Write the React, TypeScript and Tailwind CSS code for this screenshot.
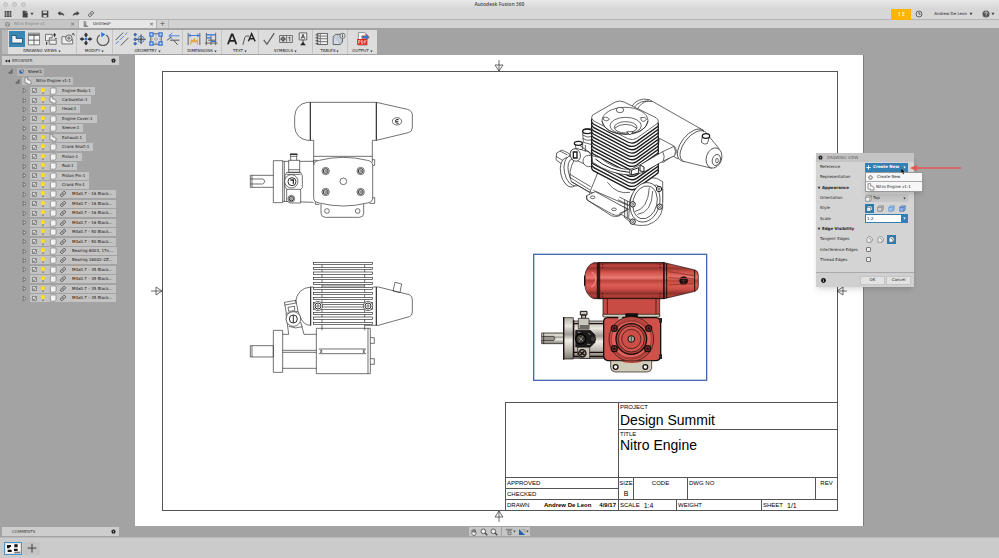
import React from "react";

const ui = "font-['DejaVu_Sans',sans-serif]";

type Children = { children: React.ReactNode };

function Glyph({ children, className = "size-4" }: Children & { className?: string }) {
  return (
    <svg viewBox="0 0 48 48" className={`${className} shrink-0`} fill="none" stroke="#4a4a4a" strokeWidth="3" aria-hidden="true">
      {children}
    </svg>
  );
}

function Caret({ className = "size-1" }: { className?: string }) {
  return (
    <svg viewBox="0 0 10 10" className={`${className} shrink-0`} aria-hidden="true">
      <path d="M1 2H9L5 8Z" fill="#444" />
    </svg>
  );
}

function Links({ className = "size-2" }: { className?: string }) {
  return (
    <Glyph className={className}>
      <g stroke="#444" strokeWidth="5">
        <path d="M20 28a8 8 0 0 1 0-11l7-7a8 8 0 0 1 11 11l-5 5" />
        <path d="M28 20a8 8 0 0 1 0 11l-7 7a8 8 0 0 1-11-11l5-5" />
      </g>
    </Glyph>
  );
}

function Gear() {
  return (
    <Glyph className="size-[5px]">
      <circle cx="24" cy="24" r="12" stroke="#222" strokeWidth="12" />
      <circle cx="24" cy="24" r="20" stroke="#222" strokeWidth="6" strokeDasharray="8 8" />
    </Glyph>
  );
}

/* ---------- top bars ---------- */

function TitleBar() {
  return (
    <header className="relative flex h-[9px] items-center justify-center bg-linear-to-b from-[#e9e9e9] to-[#d6d6d6]">
      <div className="absolute left-[3px] flex gap-1">
        {[0, 1, 2].map((i) => (
          <span key={i} className="size-[5px] rounded-full border border-[#bdbdbd] bg-[#d2d2d2]" />
        ))}
      </div>
      <h1 className="font-['Open_Sans',sans-serif] text-[5px] leading-none font-semibold text-[#444]">Autodesk Fusion 360</h1>
    </header>
  );
}

function QuickBar() {
  return (
    <div className="flex h-[11px] items-center border-b border-[#b4b4b4] bg-[#d7d7d7]">
      <button aria-label="Data panel" className="ml-1">
        <Glyph className="size-2">
          <path d="M4 11H44M4 24H44M4 37H44" stroke="#3c3c3c" strokeWidth="10" strokeDasharray="11 3.5" />
        </Glyph>
      </button>
      <button aria-label="File" className="ml-[9px] flex items-center gap-px">
        <Glyph className="size-2">
          <path d="M10 4H28V16H40V45H10Z M31 3L41 13H31Z" fill="#444" stroke="none" />
        </Glyph>
        <Caret />
      </button>
      <button aria-label="Save" className="ml-[7px]">
        <Glyph className="size-2">
          <path d="M4 4H44V44H4Z" fill="#444" stroke="none" />
          <path d="M12 7H36V20H12Z M14 30H34V42H14Z" fill="#d7d7d7" stroke="none" />
        </Glyph>
      </button>
      <button aria-label="Undo" className="ml-2">
        <Glyph className="size-2">
          <path d="M3 20L20 6V15Q42 16 44 38Q36 26 20 27V35Z" fill="#444" stroke="none" />
        </Glyph>
      </button>
      <button aria-label="Redo" className="ml-[7px]">
        <Glyph className="size-2">
          <path d="M45 20L28 6V15Q6 16 4 38Q12 26 28 27V35Z" fill="#444" stroke="none" />
        </Glyph>
      </button>
      <button aria-label="Share link" className="ml-[7px]">
        <Links />
      </button>
      <button className="ml-auto h-[11px] w-5 bg-[#ffb400] font-['Open_Sans',sans-serif] text-[5px] leading-none font-bold text-[#fff0c4]">1 E</button>
      <button aria-label="Job status" className="ml-1">
        <Glyph className="size-2">
          <circle cx="24" cy="24" r="18" strokeWidth="5" />
          <path d="M24 12V25H34" strokeWidth="5" />
        </Glyph>
      </button>
      <button className={`ml-[11px] flex items-center gap-0.5 text-[4px] leading-none whitespace-nowrap text-[#222] ${ui}`}>
        Andrew De Leon <Caret />
      </button>
      <button aria-label="Help" className="mr-1 ml-[9px] flex items-center gap-px">
        <Glyph className="size-2">
          <circle cx="24" cy="24" r="21" fill="#555" stroke="none" />
          <path d="M16 19Q17 11 24 11Q32 11 32 18Q32 22 24 26V30M24 34V39" stroke="#e4e4e4" strokeWidth="5" />
        </Glyph>
        <Caret />
      </button>
    </div>
  );
}

function SheetIcon() {
  return (
    <Glyph className="size-2">
      <path d="M10 6H22V22L40 42H10Z" fill="#8b8b8b" stroke="none" />
      <path d="M28 8V24" stroke="#aaa" />
    </Glyph>
  );
}

function Tabs() {
  return (
    <nav className={`flex h-2 items-stretch bg-[#d2d2d2] text-[4px] leading-none ${ui}`}>
      <div className="flex w-[78px] items-center bg-[#c6c6c6] pr-[3px] pl-1 text-[#858585]">
        <Glyph className="size-[7px]">
          <path d="M6 10L24 5L42 10V32L24 44L6 32Z" fill="#999" stroke="none" />
          <path d="M24 20V44M6 12L24 19L42 12" stroke="#ccc" />
        </Glyph>
        <button className="ml-[3px]">Nitro Engine v1</button>
        <button aria-label="Close Nitro Engine v1" className="ml-auto text-[6px] leading-none text-[#666]">×</button>
      </div>
      <div className="flex w-[79px] items-center border-x border-[#b2b2b2] bg-[#e6e6e6] pr-0.5 pl-[3px] text-[#222]">
        <SheetIcon />
        <button className="ml-[3px]">Untitled*</button>
        <button aria-label="Close Untitled" className="ml-auto text-[6px] leading-none text-[#555]">×</button>
      </div>
      <button aria-label="New tab" className="w-3 border-r border-[#bcbcbc] text-[7px] leading-none text-[#555]">+</button>
    </nav>
  );
}

/* ---------- toolbar ---------- */

const tools: { label: string; width: string; icons: React.ReactNode[] }[] = [
  {
    label: "DRAWING VIEWS",
    width: "w-[69px]",
    icons: [
      <path d="M6 12H21V22H43V38H6Z" fill="#eef4f8" stroke="#1f4f70" />,
      <>
        <path d="M5 4H43V44H5Z" fill="#f4f4f4" stroke="#777" />
        <path d="M5 10H43" strokeWidth="7" stroke="#777" />
        <path d="M5 28H43M24 10V44" stroke="#555" />
      </>,
      <>
        <path d="M5 8H28V20H18V30H5Z" fill="#eee" stroke="#666" />
        <path d="M18 28H42V42H18Z" fill="#eee" stroke="#666" />
        <path d="M36 4V16M32 10H41M9 34V44M37 23H44" stroke="#333" strokeWidth="4" />
      </>,
      <>
        <path d="M3 16H18V26H40V41H3Z" fill="#eee" stroke="#666" />
        <circle cx="27" cy="21" r="11" fill="#e8e8e8" stroke="#555" />
        <circle cx="27" cy="21" r="4" />
        <path d="M38 10L42 4L46 12" stroke="#333" />
      </>,
    ],
  },
  {
    label: "MODIFY",
    width: "w-9",
    icons: [
      <>
        <path d="M24 2L32 12H27V21H36V16L46 24L36 32V27H27V36H32L24 46L16 36H21V27H12V32L2 24L12 16V21H21V12H16Z" fill="#333" stroke="none" />
        <path d="M19 19H29V29H19Z" fill="#2f6fd6" stroke="#fff" strokeWidth="2" />
      </>,
      <>
        <path d="M13 10A20 20 0 1 0 35 10" stroke="#555" strokeWidth="4" />
        <path d="M17 1L32 8L19 18Z" fill="#2374e1" stroke="none" />
      </>,
    ],
  },
  {
    label: "GEOMETRY",
    width: "w-[70px]",
    icons: [
      <>
        <path d="M3 41L13 31M17 27L30 14M34 10L42 2" stroke="#3b7cd8" />
        <path d="M2 28L28 2M20 46L46 20" stroke="#444" />
      </>,
      <>
        <circle cx="31" cy="25" r="11" stroke="#3b7cd8" />
        <path d="M31 8V42M14 25H47" stroke="#444" />
        <g fill="#3b7cd8" stroke="#2458a6">
          <circle cx="11" cy="9" r="4" />
          <circle cx="11" cy="25" r="4" />
          <circle cx="11" cy="40" r="4" />
        </g>
        <circle cx="31" cy="25" r="4" />
      </>,
      <>
        <path d="M6 6H42V42H6Z" stroke="#555" />
        <path d="M24 8V40M8 24H40" stroke="#888" strokeDasharray="5 4" />
        <g fill="#cfe0f8" stroke="#2f6fd6" strokeWidth="4">
          <path d="M3 3H14V14H3ZM34 3H45V14H34ZM3 34H14V45H3ZM34 34H45V45H34Z" />
        </g>
      </>,
      <>
        <path d="M10 13H46M10 13L22 3M10 13L22 23" stroke="#3b7cd8" />
        <path d="M4 28L18 17M14 28H46M26 28L40 44" stroke="#444" />
      </>,
    ],
  },
  {
    label: "DIMENSIONS",
    width: "w-[39px]",
    icons: [
      <>
        <path d="M4 3V45M44 3V45" stroke="#555" />
        <path d="M6 12H42M13 7L6 12L13 17M35 7L42 12L35 17" stroke="#2f6fd6" />
        <path d="M12 42L16 28L22 34L25 22L28 34L35 28L36 42" stroke="#e8a02c" strokeWidth="4" />
      </>,
      <>
        <path d="M8 3V45M24 12V45M40 3V45M3 38H46M14 28H40" stroke="#555" />
        <path d="M8 10H40M10 20H24M24 32H40" stroke="#2f6fd6" strokeWidth="4" />
      </>,
    ],
  },
  {
    label: "TEXT",
    width: "w-[37px]",
    icons: [
      <path d="M10 42L23 8H26L39 42M14 30H35" stroke="#222" strokeWidth="6" />,
      <>
        <path d="M3 44L10 18Q12 12 20 14H24" stroke="#444" />
        <path d="M22 32L33 6L45 32M26 23H40" stroke="#222" strokeWidth="5" />
      </>,
    ],
  },
  {
    label: "SYMBOLS",
    width: "w-[54px]",
    icons: [
      <path d="M6 27L17 42L42 4" stroke="#555" strokeWidth="4" />,
      <>
        <path d="M2 12H46V36H2ZM26 12V36" stroke="#666" />
        <circle cx="14" cy="24" r="6" />
        <path d="M14 14V34M4 24H24M32 20L37 17V32" />
      </>,
      <>
        <path d="M11 3H37V27H11Z" fill="#eee" stroke="#555" />
        <path d="M18 23L24 8L30 23M20 18H28M24 27V42" stroke="#333" />
        <path d="M14 45L24 34L34 45Z" fill="#222" stroke="none" />
      </>,
    ],
  },
  {
    label: "TABLES",
    width: "w-[35px]",
    icons: [
      <>
        <path d="M8 5H43V43H8Z" fill="#f2f2f2" stroke="#555" />
        <path d="M8 14H43M8 23H43M8 33H43M18 5V43" stroke="#666" />
        <path d="M2 10H12M2 20H12M2 30H12M2 40H12" stroke="#333" />
      </>,
      <>
        <path d="M4 16H28V43H4Z" fill="#d5dbe2" stroke="#555" />
        <path d="M4 16L12 8H36L28 16L36 10V34L28 43" fill="#c3ccd6" stroke="#555" />
        <circle cx="36" cy="13" r="9" fill="#ddd" stroke="#666" />
        <path d="M36 8V18" />
      </>,
    ],
  },
  {
    label: "OUTPUT",
    width: "w-[29px]",
    icons: [
      <>
        <path d="M8 2H30L38 10V45H8Z" fill="#fafafa" stroke="#888" />
        <path d="M4 24H38V44H4Z" fill="#e0241b" stroke="none" />
        <path d="M9 40V29Q15 28 15 32T9 35M19 29V40Q26 40 25 34T19 29M30 40V29H36M30 34H35" stroke="#fff" strokeWidth="2" />
        <path d="M20 13H34V6L46 18L34 29V22H20Z" fill="#2b7cd3" stroke="#d8402f" strokeWidth="2" />
      </>,
    ],
  },
];

function Toolbar() {
  return (
    <div className="flex pt-0.5 pb-px">
      <div className="ml-0.5 h-6 w-1.5 bg-[#b9b9b9]" />
      <div className="flex h-6 divide-x divide-[#c4c4c4] bg-[#dddddd]">
        {tools.map((group, g) => (
          <div key={group.label} className={`flex flex-col items-center justify-between pt-px pb-px ${group.width}`}>
            <div className="flex gap-px">
              {group.icons.map((icon, i) => (
                <button
                  key={i}
                  aria-label={`${group.label} ${i + 1}`}
                  className={g === 0 && i === 0 ? "bg-[#3c86b4] p-px" : "p-px"}
                >
                  <Glyph className="size-3.5">{icon}</Glyph>
                </button>
              ))}
            </div>
            <button className={`flex items-center gap-px text-[4px] leading-none whitespace-nowrap text-[#222] ${ui}`}>
              {group.label}
              <Caret className="size-[3px]" />
            </button>
          </div>
        ))}
      </div>
    </div>
  );
}

/* ---------- browser tree ---------- */

type Part = { name: string; kind: "body" | "assembly"; linked?: boolean };

const own = (name: string, kind: Part["kind"] = "body"): Part => ({ name, kind });
const linked = (name: string): Part => ({ name, kind: "body", linked: true });

const parts: Part[] = [
  own("Engine Body:1"),
  own("Carburetor:1", "assembly"),
  own("Head:1"),
  own("Engine Cover:1"),
  own("Sleeve:1"),
  own("Exhaust:1", "assembly"),
  own("Crank Shaft:1"),
  own("Piston:1"),
  own("Rod:1"),
  own("Piston Pin:1"),
  own("Crank Pin:1"),
  linked("M4x0.7 – 16 Black..."),
  linked("M4x0.7 – 16 Black..."),
  linked("M4x0.7 – 16 Black..."),
  linked("M4x0.7 – 16 Black..."),
  linked("M4x0.7 – 50 Black..."),
  linked("M4x0.7 – 50 Black..."),
  linked("Bearing 6003, 17n..."),
  linked("Bearing 16002–2Z..."),
  linked("M4x0.7 – 35 Black..."),
  linked("M4x0.7 – 35 Black..."),
  linked("M4x0.7 – 35 Black..."),
  linked("M4x0.7 – 35 Black..."),
];

function OpenArrow() {
  return (
    <Glyph className="size-[5px]">
      <path d="M40 6V40H6Z" fill="#888" stroke="#333" strokeWidth="5" />
    </Glyph>
  );
}

function BodyIcon({ kind }: { kind: Part["kind"] }) {
  return (
    <Glyph className="size-2">
      {kind === "body" ? (
        <path d="M8 12L14 6H42V36L36 43H8Z" fill="#f3f3f3" stroke="#777" strokeWidth="4" />
      ) : (
        <path d="M6 4H22V18H30L42 26V43H20V36H6Z" fill="#f3f3f3" stroke="#666" strokeWidth="4" />
      )}
    </Glyph>
  );
}

function Browser() {
  return (
    <aside className={`pt-px pl-0.5 text-[4px] leading-none text-[#111] ${ui}`}>
      <div className="flex h-[9px] w-[117px] items-center bg-[#cdcdcd] pl-[3px] text-[#444]">
        <svg viewBox="0 0 14 8" className="h-1 w-[5px]" aria-hidden="true">
          <path d="M0 4L6 0V3H8L14 0V8L8 5H6V8Z" fill="#222" />
        </svg>
        <span className="ml-0.5">BROWSER</span>
        <button aria-label="Browser settings" className="mr-[3px] ml-auto"><Gear /></button>
      </div>
      <ul className="mt-0.5 flex h-[236px] flex-col whitespace-nowrap">
        <li className="flex flex-1 items-center pl-1.5">
          <OpenArrow />
          <span className="ml-1 flex h-2 items-center gap-1 bg-[#b6b6b6] px-0.5">
            <Glyph className="size-[5px]">
              <path d="M4 4V44H44Z" fill="#2a5fae" stroke="none" />
              <path d="M18 8H44V34" stroke="#555" strokeWidth="5" />
            </Glyph>
            Sheet1
          </span>
        </li>
        <li className="flex flex-1 items-center pl-[13px]">
          <OpenArrow />
          <span className="ml-0.5 flex h-2 items-center gap-1 bg-[#bebebe] px-0.5">
            <BodyIcon kind="assembly" />
            Nitro Engine v1:1
          </span>
        </li>
        {parts.map((part, i) => (
          <li key={i} className="flex flex-1 items-center pl-5">
            <Glyph className="size-[5px]">
              <path d="M12 4V44L38 24Z" fill="#ddd" stroke="#444" strokeWidth="6" />
            </Glyph>
            <div className="ml-[3px] flex h-2 items-center bg-[#c3c3c3] pr-1 pl-0.5">
              <span className="relative flex">
                <input
                  type="checkbox"
                  defaultChecked
                  aria-label={`Show ${part.name}`}
                  className="size-[5px] appearance-none border border-[#8b8b8b] bg-[#e3e3e3]"
                />
                <svg viewBox="0 0 10 10" className="pointer-events-none absolute inset-0 size-[5px]" aria-hidden="true">
                  <path d="M2 5L4 8L8 2" fill="none" stroke="#666" strokeWidth="1.5" />
                </svg>
              </span>
              <Glyph className="ml-[3px] h-2 w-1.5">
                <circle cx="24" cy="16" r="16" fill="#ffdf1c" stroke="#e8c218" strokeWidth="2" />
                <path d="M16 28H32V34H16Z" fill="#ffe95c" stroke="none" />
                <path d="M18 35H30V46H18Z" fill="#666" stroke="none" />
              </Glyph>
              <span className="ml-[3px]"><BodyIcon kind={part.kind} /></span>
              {part.linked && <span className="ml-0.5"><Links /></span>}
              <span className="ml-[5px]">{part.name}</span>
            </div>
          </li>
        ))}
      </ul>
    </aside>
  );
}

/* ---------- drawing views, each in units of a third of a pixel ---------- */

function Screw({ x, y, r = 11 }: { x: number; y: number; r?: number }) {
  return (
    <>
      <circle cx={x} cy={y} r={r} />
      <circle cx={x} cy={y} r={r * 0.65} strokeWidth="3" />
      <circle cx={x} cy={y} r={r * 0.25} />
    </>
  );
}

function FrontView() {
  return (
    <g transform="translate(95 30) scale(0.33333)">
      <path d="M241 52H232Q196 58 194 95V124Q196 160 232 166H251M241 52H439L532 73Q547 77 547 90V128Q547 140 535 143L439 166H427M241 52V166M439 52V166M251 166V232M427 166V232M251 214H427" />
      <path d="M241 52V166M439 52V166" strokeWidth="3" />
      <ellipse cx="501" cy="109" rx="14" ry="11" />
      <path d="M506 103Q496 102 496 109T506 115M498 109H505" strokeWidth="3" />
      <path d="M251 242Q251 228 268 226Q340 208 412 226Q428 228 428 242V338Q428 352 412 354Q340 372 268 354Q251 352 251 338Z" />
      <path d="M251 240V226H262M427 224H434V241H428M428 338H434V355H418M256 350V358H268" />
      <Screw x={287} y={258} />
      <Screw x={392} y={258} />
      <Screw x={287} y={321} />
      <Screw x={392} y={321} />
      <circle cx="340" cy="289" r="10" />
      <path d="M273 357V385Q274 396 286 397H389Q401 396 401 385V357" />
      <circle cx="291" cy="378" r="7" />
      <circle cx="383" cy="378" r="7" />
      <path d="M130 227H158V353H130Z M158 229H251M158 349L251 352M163 229V349M130 271H61V307H130M66 271V307M61 282H98Q104 284 104 289T98 297H61" />
      <path d="M181 207H201V214H181ZM182 214V226M200 214V226M176 226H209V262H176ZM176 254H209M170 262H212L217 272V308L212 313H170L165 304V272ZM170 313V348L180 354H212V313M170 268H212" fill="#fff" />
      <path d="M180 208H202" strokeWidth="4" />
      <circle cx="184" cy="289" r="20" fill="#fff" />
      <circle cx="186" cy="290" r="12" strokeWidth="3" />
      <path d="M181 285H190V296" strokeWidth="4" />
      <Screw x={184} y={341} r={10} />
    </g>
  );
}

const sideFins = [37, 52, 66, 82, 97, 112, 127, 142, 157, 171, 187, 201, 217];

function SideView() {
  return (
    <g transform="translate(95 195) scale(0.33333)">
      <path d="M250 111H242Q202 114 196 158M242 226Q224 226 214 208M242 111V226M439 111V226M428 111H445L538 134Q547 138 547 150V186Q547 197 538 200L445 226H404" />
      <path d="M242 111V226M439 111V226" strokeWidth="3" />
      <path d="M495 97L515 102L510 128L489 123Z" />
      <path d="M276 44V241M404 44V241M276 108H404" />
      {sideFins.map((y) => (
        <rect key={y} x="250" y={y} width="178" height="7" fill="#fff" />
      ))}
      <g fill="#fff">
        <Screw x={264} y={168} r={14} />
        <Screw x={414} y={168} r={14} />
      </g>
      <path d="M259 235H421V371H259ZM414 235V371M421 263H433V280H421M421 326H433V343H421" />
      <path d="M268 297H407M268 311H407M268 297Q278 304 268 311M407 297Q397 304 407 311M275 299V309M400 299V309" />
      <path d="M130 241H158V367H130ZM61 287H130V321H61ZM66 287V321M158 253H176M222 253H259M158 301H259M158 307H259M158 355H259" />
      <path d="M163 157L198 151L204 184L169 190ZM165 165L199 159M174 172L194 169V182L176 184ZM172 222L176 253M212 216L222 253M168 190L172 222M204 184L214 208" />
      <circle cx="190" cy="207" r="22" fill="#fff" />
      <circle cx="190" cy="207" r="12" strokeWidth="3" />
      <path d="M190 196V218" strokeWidth="3" />
      <path d="M176 229Q196 238 218 230" />
    </g>
  );
}

const headOutline =
  "M256 51Q269 45 282 51L378 98Q388 104 384 114L320 160Q307 168 293 161L190 107Q180 98 188 90Z";

const isoFins = [15, 14, 13, 12, 11, 10, 9, 8, 7, 6, 5, 4, 3, 2, 1, 0];

function IsoView() {
  return (
    <g transform="translate(395 30) scale(0.33333)" fill="#fff" stroke="#1c1c1c">
      <path d="M304 66Q322 36 358 44L522 137L445 222L330 160Z" />
      <path d="M312 68Q330 42 366 50M322 74Q332 52 356 47" fill="none" />
      <ellipse cx="484" cy="180" rx="30" ry="56" transform="rotate(38 484 180)" />
      <ellipse cx="490" cy="183" rx="28" ry="54" transform="rotate(38 490 183)" />
      <path d="M524 138L568 192Q582 204 574 226Q566 252 546 250L456 228Q500 200 524 138Z" stroke="none" />
      <path d="M524 138L568 192M546 250L456 228" />
      <ellipse cx="552" cy="219" rx="23" ry="31" transform="rotate(18 552 219)" />
      <ellipse cx="559" cy="225" rx="12" ry="17" transform="rotate(18 559 225)" />
      <ellipse cx="561" cy="227" rx="4" ry="7" />
      <path d="M517 154L514 172Q522 180 532 176L538 156Z" />
      <ellipse cx="528" cy="153" rx="11" ry="7" strokeWidth="4" />
      <path d="M388 160L430 182Q442 190 438 206L400 232L380 226Z" />

      <path d="M80 204L96 195L118 206V226L98 240L78 224Z" />
      <path d="M90 198L112 210M78 214L98 226" />
      <ellipse cx="118" cy="262" rx="26" ry="45" transform="rotate(-12 118 262)" />
      <ellipse cx="130" cy="258" rx="27" ry="46" transform="rotate(-12 130 258)" />
      <ellipse cx="134" cy="258" rx="19" ry="37" transform="rotate(-12 134 258)" />
      <path d="M134 222Q170 205 200 240L206 320L180 322L124 290Q112 262 134 222Z" />
      <path d="M120 268L182 305M118 276L180 315M124 290L178 322" />
      <path d="M158 142Q160 130 176 131L190 134V180L160 172Z" />
      <ellipse cx="172" cy="139" rx="14" ry="7" strokeWidth="4" />
      <path d="M158 150Q170 160 188 154M158 160Q170 170 188 164" fill="none" />
      <path d="M134 174Q146 166 158 174V192L140 198Z" />
      <ellipse cx="145" cy="175" rx="12" ry="6" strokeWidth="4" />
      <path d="M122 198L138 190L176 200L186 214L170 240L140 226L126 224Z" />
      <ellipse cx="136" cy="210" rx="15" ry="19" transform="rotate(-15 136 210)" />
      <path d="M130 201H141V219H130Z" strokeWidth="4" />
      <circle cx="176" cy="228" r="17" />
      <path d="M150 182L184 206M166 180V200" />

      <path d="M204 262L180 320V332L300 404L398 350V290L380 280Z" />
      <path d="M180 320L298 374M190 316L296 362M232 292Q262 330 300 322" fill="none" />
      <path d="M170 332L196 320L292 372L270 390Q256 394 244 386L176 348Q168 340 170 332Z" />
      <path d="M170 332V344L244 392Q256 398 270 392V384L292 376" fill="none" />
      <ellipse cx="188" cy="337" rx="7" ry="4" />
      <ellipse cx="252" cy="373" rx="7" ry="4" />

      {isoFins.map((k) => (
        <path key={k} d={headOutline} transform={`translate(0 ${k * 10})`} strokeWidth={k === 0 ? 2 : 4} />
      ))}
      <ellipse cx="285" cy="107" rx="69" ry="40" />
      <path d="M216 108Q226 147 285 148T354 108" fill="none" />
      <ellipse cx="287" cy="122" rx="47" ry="25" />
      <ellipse cx="287" cy="127" rx="34" ry="17" />
      <path d="M253 130Q268 118 287 118T321 130" fill="none" />
      <ellipse cx="270" cy="75" rx="11" ry="8" />
      <path d="M220 98Q234 94 238 104Q228 112 220 104ZM332 98Q346 94 350 102Q342 114 334 106ZM290 140H310L300 150Z" />

      <path d="M186 212L210 218Q250 252 300 254L300 270Q240 268 188 232Z" />
      <path d="M196 222Q240 258 300 262" fill="none" strokeWidth="3" />
      <path d="M300 254L330 240L398 200L432 184Q440 200 434 212L400 228L340 262L304 272Q296 262 300 254Z" />
      <path d="M398 200Q406 214 400 228" fill="none" />
      <path d="M304 256L326 248V264L304 270ZM330 240L342 246V260L330 258Z" strokeWidth="3" />

      <path d="M268 336L300 352M264 344L296 360" />
      <path d="M300 344Q310 314 342 306L380 300L398 312V368Q392 408 352 420Q322 424 306 416L296 398Z" />
      <ellipse cx="345" cy="352" rx="44" ry="60" transform="rotate(14 345 352)" />
      <ellipse cx="345" cy="352" rx="36" ry="50" transform="rotate(14 345 352)" />
      <path d="M322 388Q366 384 368 318M314 380Q354 372 358 308" fill="none" />
      <path d="M284 344V398L302 412M292 348V400" fill="none" />
      {[[387, 312], [389, 365], [308, 358], [308, 410]].map(([x, y]) => (
        <g key={`${x}-${y}`}>
          <circle cx={x} cy={y} r="8" strokeWidth="3" />
          <circle cx={x} cy={y} r="3" />
        </g>
      ))}
    </g>
  );
}

function ShadedView() {
  return (
    <g transform="translate(390 190) scale(0.33333)" stroke="#1a0f0e">
      <defs>
        <linearGradient id="tube" x1="0" y1="0" x2="0" y2="1">
          <stop offset="0" stopColor="#7c2924" />
          <stop offset="0.08" stopColor="#c04640" />
          <stop offset="0.16" stopColor="#99362f" />
          <stop offset="0.26" stopColor="#cf5049" />
          <stop offset="0.42" stopColor="#ea7a72" />
          <stop offset="0.5" stopColor="#bb443d" />
          <stop offset="0.62" stopColor="#dc5d55" />
          <stop offset="0.74" stopColor="#cb4d46" />
          <stop offset="0.86" stopColor="#8f312c" />
          <stop offset="0.93" stopColor="#b8423b" />
          <stop offset="1" stopColor="#6d231f" />
        </linearGradient>
        <linearGradient id="steel" x1="0" y1="0" x2="0" y2="1">
          <stop offset="0" stopColor="#b2afa6" />
          <stop offset="0.2" stopColor="#e9e7de" />
          <stop offset="0.4" stopColor="#9c9a93" />
          <stop offset="0.55" stopColor="#f0eee6" />
          <stop offset="0.8" stopColor="#b7b4aa" />
          <stop offset="1" stopColor="#7c7a73" />
        </linearGradient>
      </defs>
      <rect x="26" y="28" width="519" height="378" fill="none" stroke="#4568b0" strokeWidth="4" />
      <path d="M50 264H116V296H50Z" fill="url(#steel)" />
      <path d="M50 274H86Q93 280 86 287H50M56 264V296" fill="#9a988f" />
      <path d="M116 218H145V342H116Z" fill="url(#steel)" />
      <path d="M116 216V344" strokeWidth="4" />
      <path d="M145 228H236V340H145Z" fill="url(#steel)" />
      <path d="M146 226V334H236M146 236H236M146 322H236" fill="none" strokeWidth="4" />
      <path d="M166 199H186V210H166ZM170 210H182V220H170Z" fill="#c9c7bd" strokeWidth="3" />
      <path d="M160 220H192V252H160ZM158 306H194V340H166L158 330Z" fill="#c9c7bd" />
      <path d="M164 240H192V252H164Z" fill="#6b6963" stroke="none" />
      <path d="M152 256H196L210 270V292L196 306H152Z" fill="#1b1b1b" />
      <circle cx="167" cy="282" r="15" fill="#37352f" stroke="#000" strokeWidth="4" />
      <path d="M160 276L174 288M174 274L162 290M190 264L196 270M158 262H166M186 298H196" stroke="#c9c7bd" />
      <circle cx="204" cy="282" r="8" fill="#3a3a38" />
      <circle cx="172" cy="325" r="11" fill="#9a978c" strokeWidth="4" />
      <path d="M165 320L179 331M178 319L166 331" strokeWidth="4" />

      <path d="M220 53H206Q182 62 179 96V118Q182 152 206 161H220Z" fill="url(#tube)" />
      <path d="M179 92V122" strokeWidth="4" />
      <path d="M220 53H418V161H220Z" fill="url(#tube)" strokeWidth="3" />
      <path d="M418 53L510 75Q520 78 520 90V124Q520 134 510 139L418 161Z" fill="url(#tube)" />
      <path d="M217 53V161M224 53V161M416 53V161M425 55V159M509 75V139" fill="none" strokeWidth="3" />
      <path d="M200 82Q214 88 212 108Q208 122 198 126" fill="none" stroke="#f0837a" strokeWidth="4" />
      <path d="M233 58V70M233 144V156M405 58V70M405 144V156" strokeDasharray="3 5" strokeWidth="3" />
      <circle cx="476" cy="107" r="12" fill="#141414" />
      <path d="M469 107H483M476 100V114" stroke="#7d2a25" />
      <path d="M430 80L508 92M430 98L508 102M430 120L508 116" stroke="#9c352f" strokeWidth="3" />

      <path d="M234 161H404V212H234Z" fill="#c84b44" />
      <path d="M247 161V210M393 161V210" />
      <path d="M234 208H404V216H234Z" fill="#d4d0bd" />
      <path d="M302 206H338V216H302Z" fill="#111" />
      <path d="M236 230Q236 219 248 218H394Q407 220 407 234V330Q407 346 394 347H248Q236 344 236 332Z" fill="#d0514a" strokeWidth="4" />
      <path d="M280 212H292V224H280Z" fill="#b9b9b9" stroke="none" />
      <path d="M403 219H411V233H403ZM403 328H411V342H403Z" fill="#222" stroke="none" />
      <circle cx="319" cy="282" r="67" fill="#c94c45" />
      <circle cx="319" cy="282" r="60" fill="#de625a" stroke="#8d2f29" />
      <path d="M270 254A58 58 0 0 1 366 252M272 318A58 58 0 0 0 366 314" fill="none" stroke="#a33a34" strokeWidth="6" />
      <circle cx="319" cy="282" r="46" fill="#b5423b" strokeWidth="4" />
      <circle cx="319" cy="282" r="39" fill="#d5554e" />
      <circle cx="319" cy="282" r="29" fill="#cd4e47" />
      <circle cx="319" cy="282" r="10" fill="#aaa596" strokeWidth="3" />
      <path d="M319 274V290" />
      {[[268, 250], [371, 250], [268, 311], [368, 311]].map(([x, y]) => (
        <g key={`${x}-${y}`}>
          <circle cx={x} cy={y} r="9" fill="#8c2f29" strokeWidth="4" />
          <circle cx={x} cy={y} r="3" fill="#111" />
        </g>
      ))}
      <path d="M257 347H380V370Q378 380 368 381H270Q258 380 257 368Z" fill="#cfccba" />
      <path d="M284 347H358Q340 354 320 354T284 347Z" fill="#b13c35" stroke="none" />
      <circle cx="272" cy="366" r="7" fill="#fff" strokeWidth="4" />
      <circle cx="361" cy="366" r="7" fill="#fff" strokeWidth="4" />
    </g>
  );
}

/* ---------- title block ---------- */

function TitleBlock() {
  return (
    <section className="grid h-[108px] w-[332px] grid-cols-[113px_1fr] border-t border-l border-[#555] font-['Liberation_Sans',sans-serif] text-[6px] leading-none font-medium whitespace-nowrap text-black">
      <div className="flex flex-col border-r border-[#555]">
        <div className="flex-1" />
        <div className="flex h-[11px] items-center border-t border-[#555] pl-px">APPROVED</div>
        <div className="flex h-[11px] items-center border-t border-[#555] pl-px">CHECKED</div>
        <div className="flex h-[11px] items-center border-t border-[#555] pr-0.5 pl-px">
          <span>DRAWN</span>
          <span className="ml-auto font-bold">Andrew De Leon</span>
          <span className="ml-2 font-bold">4/9/17</span>
        </div>
      </div>
      <div className="flex flex-col">
        <div className="h-[26px] pt-px pl-px">
          <p>PROJECT</p>
          <p className="text-sm">Design Summit</p>
        </div>
        <div className="flex-1 border-t border-[#555] pt-px pl-px">
          <p>TITLE</p>
          <p className="text-sm leading-4">Nitro Engine</p>
        </div>
        <div className="flex h-[22px] border-t border-[#555] pt-0 text-center">
          <div className="flex w-[15px] flex-col items-center gap-1 border-r border-[#555] pt-0.5">
            <span>SIZE</span>
            <span className="text-[7px] leading-none">B</span>
          </div>
          <div className="w-[54px] border-r border-[#555] pt-0.5">CODE</div>
          <div className="flex-1 border-r border-[#555] pt-0.5 pl-px text-left">DWG NO</div>
          <div className="w-[21px] pt-0.5">REV</div>
        </div>
        <div className="flex h-[11px] items-center border-t border-[#555]">
          <div className="flex h-full w-[58px] items-center gap-1 border-r border-[#555] pl-px">
            SCALE <span className="text-[7px] leading-none">1:4</span>
          </div>
          <div className="flex h-full flex-1 items-center border-r border-[#555] pl-px">WEIGHT</div>
          <div className="flex h-full w-[75px] items-center gap-1 pl-px">
            SHEET <span className="text-[7px] leading-none">1/1</span>
          </div>
        </div>
      </div>
    </section>
  );
}

function Sheet() {
  return (
    <main className="relative border-r border-[#7d7d7d] bg-white pt-4 pr-[25px] pb-[15px] pl-[27px]">
      <div className="flex h-full items-end justify-end border border-[#555]">
        <TitleBlock />
      </div>
      <svg
        viewBox="0 0 728 471"
        className="pointer-events-none absolute inset-0 size-full"
        fill="none"
        stroke="#2c2c2c"
        strokeWidth="2"
        role="img"
        aria-label="Front, isometric, side and shaded views of the engine"
      >
        <FrontView />
        <IsoView />
        <SideView />
        <ShadedView />
        <g strokeWidth="0.7">
          <path d="M364 5V16M360 10H368L364 16Z" />
          <path d="M364 467V456M360 462H368L364 456Z" />
          <path d="M16 236H27M21 232V240L27 236Z" />
          <path d="M712 236H702M708 232V240L702 236Z" />
        </g>
      </svg>
    </main>
  );
}

/* ---------- drawing view dialog ---------- */

function CubeIcon({ fill = "#f4f4f4", stroke = "#666" }: { fill?: string; stroke?: string }) {
  return (
    <Glyph className="size-[7px]">
      <path d="M5 16L15 6H43V32L33 43H5ZM5 16H33V43M33 16L43 6" fill={fill} stroke={stroke} strokeWidth="4" />
    </Glyph>
  );
}

function EdgeIcon({ stroke = "#666" }: { stroke?: string }) {
  return (
    <Glyph className="size-[7px]">
      <path d="M7 14L18 5H32L43 18V34L34 43H7ZM18 14Q32 16 34 30V43" fill="#f1f1f1" stroke={stroke} strokeWidth="4" />
    </Glyph>
  );
}

function Row({ label, htmlFor, children }: Children & { label: string; htmlFor?: string }) {
  return (
    <div className="flex min-h-0 flex-1 items-center">
      <label htmlFor={htmlFor} className="w-[45px] shrink-0">{label}</label>
      {children}
    </div>
  );
}

function Heading({ children }: Children) {
  return (
    <h3 className="flex min-h-0 flex-1 items-center gap-px font-bold">
      <Caret className="-ml-[3px] size-1" />
      {children}
    </h3>
  );
}

function ViewDialog() {
  const selected = "flex size-[9px] items-center justify-center bg-[#2f7db0]";
  const plain = "flex size-[9px] items-center justify-center";
  return (
    <section className={`absolute top-[98px] right-[85px] w-[98px] bg-[#d4d4d4] text-[4px] leading-none whitespace-nowrap text-[#222] shadow-md ${ui}`}>
      <h2 className="flex h-[9px] items-center gap-1 bg-[#c4c4c4] pl-0.5 text-[#666]">
        <Gear />
        DRAWING VIEW
      </h2>
      <div className="flex h-[103px] flex-col pl-1">
        <Row label="Reference">
          <button className="flex h-[9px] w-[43px] items-center gap-0.5 bg-[#3580b2] pr-0.5 pl-px font-bold text-white" aria-haspopup="menu" aria-expanded="true">
            <Glyph className="size-[5px]">
              <path d="M24 4V44M4 24H44" stroke="#fff" strokeWidth="9" />
            </Glyph>
            Create New
            <svg viewBox="0 0 10 10" className="ml-auto size-[3px]" aria-hidden="true"><path d="M1 2H9L5 8Z" fill="#fff" /></svg>
          </button>
        </Row>
        <Row label="Representation"><span /></Row>
        <Heading>Appearance</Heading>
        <Row label="Orientation" htmlFor="orientation">
          <span className="flex h-2 w-[43px] items-center bg-[#c6c6c6]">
            <CubeIcon />
            <select id="orientation" defaultValue="Top" className="ml-px h-2 min-w-0 flex-1 appearance-none text-[4px] leading-none">
              <option>Top</option>
              <option>Front</option>
            </select>
            <Caret className="mr-0.5 size-[3px]" />
          </span>
        </Row>
        <Row label="Style">
          <div className="flex gap-0.5">
            <button aria-label="Visible edges" className={selected}><CubeIcon stroke="#20506f" /></button>
            <button aria-label="Visible and hidden edges" className={plain}><CubeIcon fill="none" /></button>
            <button aria-label="Shaded" className={plain}><CubeIcon fill="#9cc3ee" stroke="#5b8ecb" /></button>
            <button aria-label="Shaded with hidden edges" className={plain}><CubeIcon fill="#8ab6ea" stroke="#3c62a0" /></button>
          </div>
        </Row>
        <Row label="Scale" htmlFor="scale">
          <span className="flex h-[9px] w-[43px] items-center border border-[#3580b2] bg-white">
            <input id="scale" defaultValue="1:2" className="h-[7px] w-9 min-w-0 flex-1 pl-px text-[4px] leading-none outline-none" />
            <span className="flex h-full w-1.5 items-center justify-center bg-[#3580b2]">
              <svg viewBox="0 0 10 10" className="size-[3px]" aria-hidden="true"><path d="M1 2H9L5 8Z" fill="#fff" /></svg>
            </span>
          </span>
        </Row>
        <Heading>Edge Visibility</Heading>
        <Row label="Tangent Edges">
          <div className="flex gap-0.5">
            <button aria-label="Full length" className={plain}><EdgeIcon /></button>
            <button aria-label="Shortened" className={plain}><EdgeIcon /></button>
            <button aria-label="Off" className={selected}><EdgeIcon stroke="#20506f" /></button>
          </div>
        </Row>
        <Row label="Interference Edges" htmlFor="interference">
          <input id="interference" type="checkbox" className="ml-px size-[5px] appearance-none rounded-[1px] border border-[#777] bg-[#eee]" />
        </Row>
        <Row label="Thread Edges" htmlFor="thread">
          <input id="thread" type="checkbox" className="ml-px size-[5px] appearance-none rounded-[1px] border border-[#777] bg-[#eee]" />
        </Row>
      </div>
      <div className="mt-[7px] flex h-[15px] items-center gap-[3px] border-t border-[#aaa] bg-[#d0d0d0] pr-1 pl-[5px]">
        <Glyph className="size-[5px]">
          <circle cx="24" cy="24" r="23" fill="#111" stroke="none" />
          <path d="M24 10V16M24 20V38" stroke="#fff" strokeWidth="6" />
        </Glyph>
        <button className="ml-auto h-[7px] w-[23px] bg-[#e2e2e2] ring-1 ring-[#c4c4c4]">OK</button>
        <button className="h-[7px] w-[23px] bg-[#e2e2e2] ring-1 ring-[#c4c4c4]">Cancel</button>
      </div>

      <div role="menu" className="absolute top-[19px] left-[49px] w-[58px] border border-[#999] bg-[#f7f7f7] shadow-md">
        <button role="menuitem" className="flex h-[9px] w-full items-center gap-1 border-b border-[#aaa] pl-0.5">
          <Glyph className="size-[5px]"><path d="M18 4H30V18H44V30H30V44H18V30H4V18H18Z" strokeWidth="5" /></Glyph>
          Create New
        </button>
        <button role="menuitem" className="flex h-[9px] w-full items-center gap-px pl-px">
          <BodyIcon kind="assembly" />
          Nitro Engine v1:1
        </button>
      </div>
      <svg viewBox="0 0 10 16" className="absolute top-[15px] left-[85px] h-[7px] w-1" aria-hidden="true">
        <path d="M0 0V12L3 9L5 15L8 14L6 9H10Z" fill="#000" stroke="#fff" strokeWidth="0.6" />
      </svg>
      <svg viewBox="0 0 52 8" className="absolute top-[11px] left-[94px] h-2 w-[52px]" aria-hidden="true">
        <path d="M4 4H51" stroke="#e4574f" strokeWidth="1.5" />
        <path d="M0 4L7 1V7Z" fill="#e4574f" />
      </svg>
    </section>
  );
}

/* ---------- bottom bars ---------- */

function NavBar() {
  return (
    <div className="flex h-[9px] items-center bg-[#c6c6c6] px-px">
      <button aria-label="Pan">
        <Glyph className="size-2">
          <path d="M12 24V12M19 22V6M26 22V6M33 24V10M10 24H36V34L30 44H18L6 28" fill="#eee" stroke="#444" strokeWidth="4" />
        </Glyph>
      </button>
      {["Zoom", "Zoom window"].map((name) => (
        <button key={name} aria-label={name} className="ml-0.5">
          <Glyph className="size-2">
            <circle cx="20" cy="20" r="14" fill="#f0f0f0" stroke="#444" strokeWidth="5" />
            <path d="M30 30L44 44" strokeWidth="8" />
          </Glyph>
        </button>
      ))}
      <span className="mx-[3px] h-[9px] w-px bg-[#a0a0a0]" />
      <button aria-label="Display" className="flex items-center">
        <Glyph className="size-2">
          <path d="M4 8H44M10 16H40M18 24H36V40H18Z" stroke="#555" strokeWidth="4" />
        </Glyph>
        <Caret className="size-[3px]" />
      </button>
      <button aria-label="Sheet display" className="ml-0.5 flex items-center">
        <Glyph className="size-2">
          <path d="M6 6V42H42Z" fill="#2a5fae" stroke="none" />
          <path d="M20 10H42V34" stroke="#777" />
        </Glyph>
        <Caret className="size-[3px]" />
      </button>
    </div>
  );
}

function Footer() {
  return (
    <footer className="flex h-[21px] items-center gap-px border-t border-[#b9b9b9] bg-[#cbcbcb] pl-1">
      <button aria-label="Sheet 1" className="h-[13px] w-[18px] border border-[#4b92c6] bg-white">
        <svg viewBox="0 0 48 33" className="size-full" aria-hidden="true">
          <path d="M6 6H18V12H14V16H6ZM8 20H20V27H8ZM28 4H38V13H28ZM27 17H38V24H27Z" fill="#111" />
          <path d="M2 2H46V31H2Z" fill="none" stroke="#999" />
          <path d="M28 26H46V31H28Z" fill="#777" />
        </svg>
      </button>
      <button aria-label="Add sheet" className="flex h-[13px] w-[17px] items-center justify-center bg-[#c4c4c4]">
        <Glyph className="size-2.5"><path d="M24 3V45M3 24H45" stroke="#555" strokeWidth="6" /></Glyph>
      </button>
    </footer>
  );
}

export default function App() {
  return (
    <div className="flex min-h-screen flex-col overflow-hidden bg-[#a3a3a3]">
      <TitleBar />
      <QuickBar />
      <Tabs />
      <Toolbar />
      <div className="relative grid flex-1 grid-cols-[135px_1fr_135px]">
        <Browser />
        <Sheet />
        <ViewDialog />
      </div>
      <div className="grid h-[11px] grid-cols-[135px_1fr_135px] items-center">
        <div className={`ml-0.5 flex h-[9px] w-[117px] items-center bg-[#cdcdcd] pl-2.5 text-[4px] leading-none text-[#444] ${ui}`}>
          COMMENTS
          <button aria-label="Comment settings" className="mr-[3px] ml-auto"><Gear /></button>
        </div>
        <div className="flex justify-center">
          <NavBar />
        </div>
      </div>
      <Footer />
    </div>
  );
}
